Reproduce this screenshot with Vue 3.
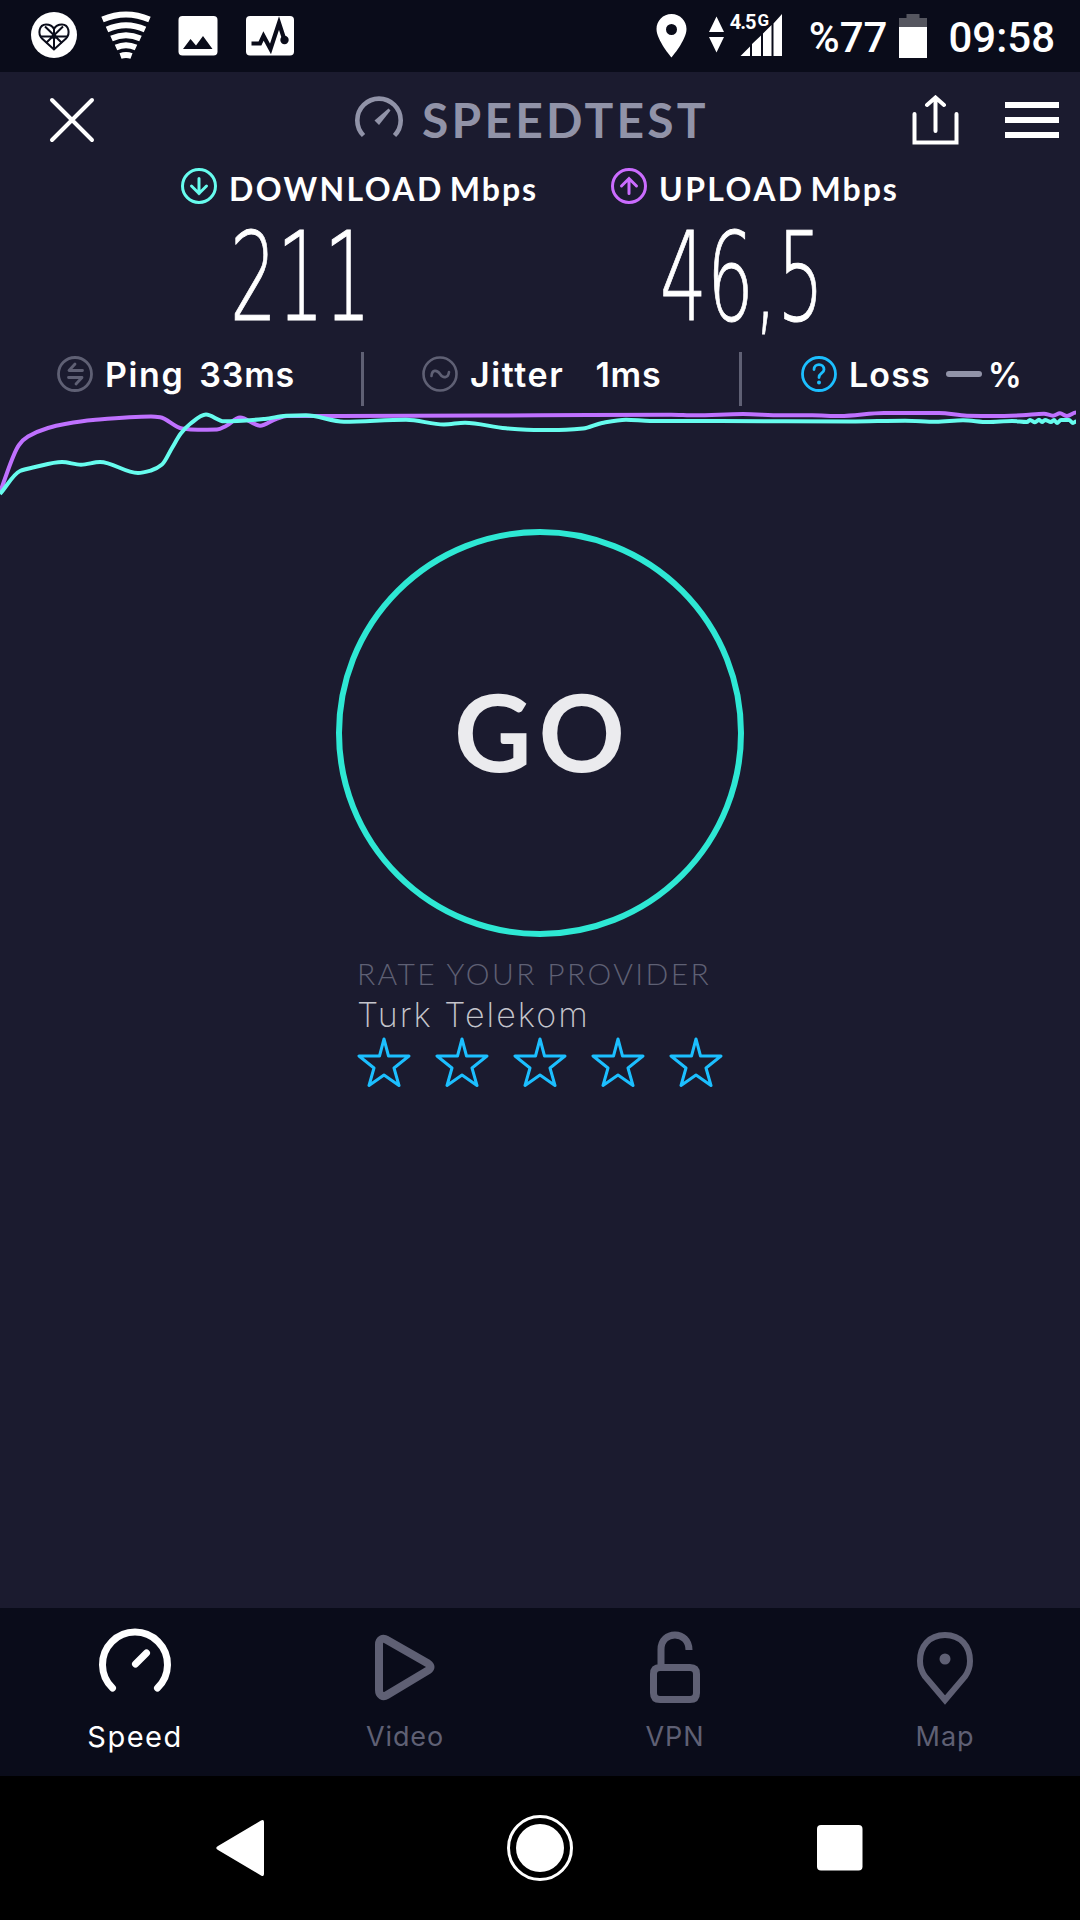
<template>
  <div class="screen">
    <div class="status">
      <svg class="status-left" width="270" height="72" viewBox="30 0 270 72">
        <circle cx="54" cy="35" r="23" fill="#fff" />
        <g fill="none" stroke="#0a0c1a" stroke-width="2">
          <path d="M54 49.500L42 38.500C37.500 34 39 24.500 46 24.500C50 24.500 52.500 26 54 29C55.500 26 58 24.500 62 24.500C69 24.500 70.500 34 66 38.500Z" />
          <path d="M54 28V49M40 36.500H68M45 26.500L62 43M63 26.500L46 43" />
        </g>
        <circle cx="54" cy="36.500" r="2.500" fill="#0a0c1a" />
        <g fill="none" stroke="#fff" stroke-width="6">
          <path d="M102.500 19.500Q126 9.500 149.500 19.500" />
          <path d="M107 29.500Q126 21 145 29.500" />
          <path d="M111.500 38.500Q126 32 140.500 38.500" />
          <path d="M116 47.500Q126 43 136 47.500" />
          <path d="M120.500 56Q126 54 131.500 56" />
        </g>
        <rect x="178.500" y="16" width="39" height="39.500" rx="4" fill="#fff" />
        <path d="M183 49L190.500 39L196 45.500L203 36L212.500 49Z" fill="#0a0c1a" />
        <rect x="246" y="16" width="48" height="39.500" rx="4" fill="#fff" />
        <path d="M251.500 43.500H260L263.500 36L270.500 49L279 23L284.500 40" fill="none" stroke="#0a0c1a" stroke-width="4.200" />
        <circle cx="284.500" cy="40" r="4.200" fill="#0a0c1a" />
      </svg>
      <div class="status-right">
        <svg width="31" height="44" viewBox="0 0 31 44">
          <path fill="#fff" fill-rule="evenodd" d="M15.500 0C7 0 .500 6.800 .500 15C.500 26 15.500 43.500 15.500 43.500S30.500 26 30.500 15C30.500 6.800 24 0 15.500 0ZM15.500 10A5.500 5.500 0 1 1 15.500 21A5.500 5.500 0 1 1 15.500 10Z" />
        </svg>
        <div class="signal">
          <svg width="74" height="44" viewBox="709 15 74 44">
            <g fill="#fff">
              <path d="M709 33L716.500 17.500L724 33ZM709 38H724L716.500 53.500Z" />
              <path d="M740.500 57L750 47.500V57ZM752 57V45L761 36.500V57ZM763 57V34.500L771.500 26V57ZM773.500 57V24.500L782 15V57Z" />
            </g>
          </svg>
          <span class="net">4.5<small>G</small></span>
        </div>
        <span class="battery-text">%77</span>
        <svg class="battery" width="28" height="44" viewBox="0 0 28 44">
          <path d="M0 4H7.500V0H20.500V4H28V13H0Z" fill="#55565f" />
          <rect y="13" width="28" height="31" fill="#fff" />
        </svg>
        <span class="clock">09:58</span>
      </div>
    </div>

    <header class="header">
      <svg class="close" width="48" height="48" viewBox="0 0 48 48">
        <path d="M4 4L44 44M44 4L4 44" stroke="#fff" stroke-width="4" stroke-linecap="round" />
      </svg>
      <div class="brand">
        <svg width="48" height="48" viewBox="0 0 48 48">
          <path d="M8.500 39.500A21.700 21.700 0 1 1 39.500 39.500" fill="none" stroke="#9193a8" stroke-width="4.600" />
          <path d="M33.500 12.500L35.500 14.500L24 29L19.500 24.500Z" fill="#9193a8" />
        </svg>
        <span class="brand-name">SPEEDTEST</span>
      </div>
      <svg class="share" width="48" height="50" viewBox="0 0 48 50">
        <path d="M2.500 19V47.500H44.500V19M23.500 36V3M15 10L23.500 2.500L32 10" fill="none" stroke="#fff" stroke-width="4" stroke-linecap="round" />
      </svg>
      <div class="menu"><i></i><i></i><i></i></div>
    </header>

    <section class="results">
      <div class="result down">
        <div class="result-head">
          <svg width="36" height="36" viewBox="0 0 36 36">
            <g fill="none" stroke="#67fcee" stroke-width="3" stroke-linecap="round">
              <circle cx="18" cy="18" r="16.500" />
              <path d="M18 10.500V25.500M10.500 18L18 25.500L25.500 18" />
            </g>
          </svg>
          <span class="kind">DOWNLOAD</span><span class="unit">Mbps</span>
        </div>
        <div class="value">211</div>
      </div>
      <div class="result up">
        <div class="result-head">
          <svg width="36" height="36" viewBox="0 0 36 36">
            <g fill="none" stroke="#cb6cff" stroke-width="3" stroke-linecap="round">
              <circle cx="18" cy="18" r="16.500" />
              <path d="M18 25.500V10.500M10.500 18L18 10.500L25.500 18" />
            </g>
          </svg>
          <span class="kind">UPLOAD</span><span class="unit">Mbps</span>
        </div>
        <div class="value">46,5</div>
      </div>
    </section>

    <section class="details">
      <div class="detail ping">
        <svg width="36" height="36" viewBox="0 0 36 36">
          <g fill="none" stroke="#5f6074" stroke-width="2.800" stroke-linecap="round" stroke-linejoin="round">
            <circle cx="18" cy="18" r="16.500" />
            <path d="M18 8L12 14.500H25.500M11.500 21.500H25L19 28" />
          </g>
        </svg>
        <span class="name">Ping</span><span class="amount">33ms</span>
      </div>
      <div class="detail jitter">
        <svg width="36" height="36" viewBox="0 0 36 36">
          <g fill="none" stroke="#5f6074" stroke-width="2.600" stroke-linecap="round">
            <circle cx="18" cy="18" r="16.500" />
            <path d="M9.500 20C10 13.500 15 13.500 18 18S26 22.500 27 16" />
          </g>
        </svg>
        <span class="name">Jitter</span><span class="amount">1ms</span>
      </div>
      <div class="detail loss">
        <svg width="36" height="36" viewBox="0 0 36 36">
          <g fill="none" stroke="#1cbfff" stroke-width="2.800" stroke-linecap="round">
            <circle cx="18" cy="18" r="16.500" />
            <path d="M13 13.500C13 7 23 7 23 13.500C23 17.500 18 17 18 21.500" />
          </g>
          <circle cx="18" cy="26.500" r="2" fill="#1cbfff" />
        </svg>
        <span class="name">Loss</span><i class="dash"></i><span class="percent">%</span>
      </div>
    </section>

    <svg class="chart" width="1080" height="90" viewBox="0 408 1080 90">
      <path :d="smooth(upload)" stroke="#bf71ff" />
      <path :d="smooth(download)" stroke="#67fcee" />
    </svg>

    <main class="main">
      <button class="go"><span>GO</span></button>
      <div class="provider">
        <div class="rate">RATE YOUR PROVIDER</div>
        <div class="isp">Turk Telekom</div>
        <div class="stars">
          <svg v-for="n in 5" :key="n" width="54" height="52" viewBox="0 0 54 52">
            <path d="M27 2L31.500 19H52L37 31L42 48.500L27 38L12 48.500L17 31L2 19H22.500Z" fill="none" stroke="#1cbfff" stroke-width="3" stroke-linejoin="round" />
          </svg>
        </div>
      </div>
    </main>

    <nav class="tabs">
      <div v-for="tab in tabs" :key="tab.name" class="tab" :class="{ active: tab.active }">
        <svg width="76" height="80" viewBox="0 0 76 80" fill="none" stroke="currentColor">
          <path :d="tab.path" :stroke-width="tab.stroke" :stroke-linecap="tab.cap" />
          <circle v-if="tab.dot" cx="38" cy="32" r="5.500" fill="currentColor" stroke="none" />
        </svg>
        <span>{{ tab.name }}</span>
      </div>
    </nav>

    <div class="android">
      <svg width="66" height="66" viewBox="0 0 66 66">
        <path d="M11 31L54 5.500Q57 4 57 7V59Q57 62 54 60.500L11 35Q7.500 33 11 31Z" fill="#fff" />
      </svg>
      <svg width="66" height="66" viewBox="0 0 66 66">
        <circle cx="33" cy="33" r="31.500" fill="none" stroke="#fff" stroke-width="3" />
        <circle cx="33" cy="33" r="24" fill="#fff" />
      </svg>
      <svg width="66" height="66" viewBox="0 0 66 66">
        <rect x="10" y="10" width="45.500" height="45.500" rx="4" fill="#fff" />
      </svg>
    </div>
  </div>
</template>

<script setup>
// speed samples, [x, y] on the chart
const upload = [
  [0, 492], [19, 445], [28, 436.5], [48, 428], [65, 424], [93, 420], [151, 416.5], [160, 417.3],
  [182, 428.5], [198, 429.7], [217, 429.5], [226, 426], [240, 417.5], [260, 425.7], [276, 419],
  [287, 416], [340, 416], [540, 415.3], [671, 414.7], [695, 415.3], [743, 414], [781, 415.3],
  [812, 415.3], [840, 416], [884, 413], [939, 413], [967, 415.7], [994, 416], [1022, 415.3],
  [1044, 413.7], [1053, 415.7], [1060, 413.3], [1067, 416], [1076, 412.5],
]
const download = [
  [0, 494], [20, 471], [34, 467.3], [62, 462], [81, 464.7], [100, 462], [138, 473], [151, 470.5],
  [162, 464.5], [172, 448], [181, 433.3], [190, 424], [206, 414.5], [224, 421.3], [265, 419],
  [286, 415.7], [306, 415.3], [344, 421.7], [406, 419.7], [444, 424.5], [465, 422.7], [506, 428.3],
  [540, 430], [566, 429.7], [583, 428.5], [602, 423], [626, 419.7], [650, 421], [720, 421],
  [850, 421.5], [905, 420.7], [936, 421.7], [963, 420.3], [988, 422], [1012, 421], [1027, 422],
  [1030, 420], [1035, 422.3], [1039, 419.8], [1042, 422], [1045, 420], [1051, 422], [1054, 420],
  [1057, 423], [1061, 420], [1069, 420], [1073, 423], [1076, 421.5],
]

// monotone curve through all points
const smooth = (points) => {
  let d = `M${points[0][0]} ${points[0][1]}`
  for (let i = 0; i < points.length - 1; i++) {
    const p0 = points[i - 1] || points[i]
    const p1 = points[i]
    const p2 = points[i + 1]
    const p3 = points[i + 2] || p2
    const dx = (p2[0] - p1[0]) / 3
    const m1 = p1 === p0 ? 0 : slope(p0, p1, p2)
    const m2 = p3 === p2 ? 0 : slope(p1, p2, p3)
    const c1 = i === 0 ? [p1[0] + dx, p1[1] + (p2[1] - p1[1]) / 3] : [p1[0] + dx, p1[1] + m1 * dx]
    d += `C${c1[0]} ${c1[1]} ${p2[0] - dx} ${p2[1] - m2 * dx} ${p2[0]} ${p2[1]}`
  }
  return d
}

const slope = (a, b, c) => {
  const left = (b[1] - a[1]) / (b[0] - a[0])
  const right = (c[1] - b[1]) / (c[0] - b[0])
  if (left * right <= 0) return 0
  return (2 * left * right) / (left + right)
}

const tabs = [
  { name: 'Speed', active: true, stroke: 7, cap: 'round', path: 'M15.500 61A32.500 32.500 0 1 1 60.500 61M38.500 37L49.500 26' },
  { name: 'Video', stroke: 8, path: 'M12 17.500C12 12 16 10.500 20 13L61 36.500Q66 40 61 43.500L20 68C16 70.500 12 68.500 12 63Z' },
  { name: 'VPN', stroke: 7, path: 'M24 38V22.500C24 3 52 3 52 23M23 40.500H53Q59.500 40.500 59.500 47V66Q59.500 72.500 53 72.500H23Q16.500 72.500 16.500 66V47Q16.500 40.500 23 40.500Z' },
  { name: 'Map', stroke: 6, dot: true, path: 'M38 8C22 8 13 19.500 13 34C13 40 14.500 44.500 18 49.500L38 73L58 49.500C61.500 44.500 63 40 63 34C63 19.500 54 8 38 8Z' },
]
</script>

<style>
body {
  background: #1b1b2f;
}
</style>

<style scoped>
.screen {
  display: flex;
  flex-direction: column;
  width: 1080px;
  height: 1920px;
  overflow: hidden;
  background: #1b1b2f;
  color: #fff;
  font-family: Inter, "Liberation Sans", sans-serif;
  white-space: nowrap;
}

svg {
  display: block;
  flex: none;
}

span {
  flex: none;
}

.status {
  display: flex;
  justify-content: space-between;
  height: 72px;
  padding: 0 25px 0 30px;
  background: #0a0c1a;
  font-family: Roboto, "Liberation Sans", sans-serif;
  font-weight: 500;
}

.status-right {
  display: flex;
  align-items: center;
  font-size: 42px;
}

.signal {
  position: relative;
  margin-left: 22px;
}

.net {
  position: absolute;
  left: 21px;
  top: -6px;
  font-size: 20px;
  font-weight: 700;
  line-height: 24px;
  letter-spacing: -1px;
}

.net small {
  margin-left: 2px;
  font-size: 17px;
  vertical-align: 3px;
}

.battery-text {
  margin: 2px 0 0 26px;
}

.battery {
  margin-left: 12px;
}

.clock {
  margin: 2px 0 0 21px;
}

.header {
  display: flex;
  align-items: center;
  height: 96px;
  padding: 0 21px 0 48px;
}

.brand {
  display: flex;
  align-items: center;
  width: 557px;
  margin-left: 259px;
}

.brand-name {
  margin: -2px 0 0 19px;
  color: #9193a8;
  font-family: Lato, sans-serif;
  font-size: 48px;
  font-weight: 700;
  letter-spacing: 3.2px;
}

.menu {
  display: flex;
  flex-direction: column;
  gap: 9px;
  width: 54px;
  margin-left: 45px;
}

.menu i {
  height: 6px;
  background: #fff;
}

.results {
  display: flex;
  height: 184px;
  padding-left: 181px;
}

.result {
  width: 430px;
}

.result-head {
  display: flex;
  align-items: center;
  height: 36px;
  font-family: Lato, sans-serif;
  font-size: 32px;
  font-weight: 700;
}

.kind {
  margin: 4px 0 0 12px;
  letter-spacing: 2.4px;
}

.unit {
  margin: 4px 0 0 6px;
  letter-spacing: 2px;
}

.value {
  width: 300px;
  height: 148px;
  margin-left: 49px;
  font-family: "DejaVu Sans", sans-serif;
  font-size: 123px;
  font-weight: 200;
  line-height: 148px;
  transform: scaleX(0.6);
  transform-origin: 0 0;
  -webkit-text-stroke: 1px #fff;
}

.details {
  display: flex;
  height: 54px;
  padding-left: 57px;
}

.detail {
  display: flex;
  align-items: center;
  box-sizing: border-box;
  height: 54px;
  padding-bottom: 10px;
  font-size: 34px;
  font-weight: 600;
}

.ping,
.jitter {
  border-right: 3px solid #5f6074;
}

.ping {
  width: 307px;
}

.jitter {
  width: 378px;
  padding-left: 58px;
}

.loss {
  padding-left: 59px;
}

.name {
  margin-left: 12px;
  letter-spacing: 1.6px;
}

.amount {
  margin-left: 15px;
  letter-spacing: 0.8px;
}

.jitter .amount {
  margin-left: 31px;
}

.loss .name {
  letter-spacing: 1.1px;
}

.dash {
  width: 36px;
  height: 6px;
  margin-left: 15px;
  border-radius: 3px;
  background: #9193a8;
}

.percent {
  margin-left: 6px;
}

.chart {
  margin-top: 2px;
  fill: none;
  stroke-width: 4;
}

.main {
  display: flex;
  flex: 1;
  flex-direction: column;
  align-items: center;
  padding-top: 31px;
}

.go {
  display: flex;
  flex: none;
  align-items: center;
  justify-content: center;
  box-sizing: border-box;
  width: 408px;
  height: 408px;
  padding: 0 0 6px 6px;
  border: 6px solid #2ee8d4;
  border-radius: 50%;
  background: none;
  color: #ebebee;
  font-family: Lato, sans-serif;
  font-size: 107px;
  font-weight: 700;
  letter-spacing: 7px;
}

.provider {
  width: 366px;
  margin-top: 18px;
}

.rate {
  height: 40px;
  color: #5f6074;
  font-family: Lato, sans-serif;
  font-size: 30px;
  font-weight: 300;
  line-height: 36px;
  letter-spacing: 2.4px;
}

.isp {
  height: 42px;
  color: #c5c5cc;
  font-size: 34px;
  font-weight: 200;
  line-height: 40px;
  letter-spacing: 2px;
}

.stars {
  display: flex;
  gap: 24px;
}

.tabs {
  display: flex;
  height: 168px;
  background: #0a0c1a;
}

.tab {
  display: flex;
  flex-direction: column;
  align-items: center;
  width: 270px;
  padding-top: 19px;
  color: #5f6074;
  font-size: 27px;
  letter-spacing: 0.9px;
}

.tab span {
  height: 40px;
  margin-top: 8px;
  line-height: 43px;
}

.active {
  color: #fff;
  font-size: 29px;
  letter-spacing: 1.5px;
}

.android {
  display: flex;
  align-items: center;
  justify-content: center;
  gap: 234px;
  height: 144px;
  background: #000;
}
</style>
